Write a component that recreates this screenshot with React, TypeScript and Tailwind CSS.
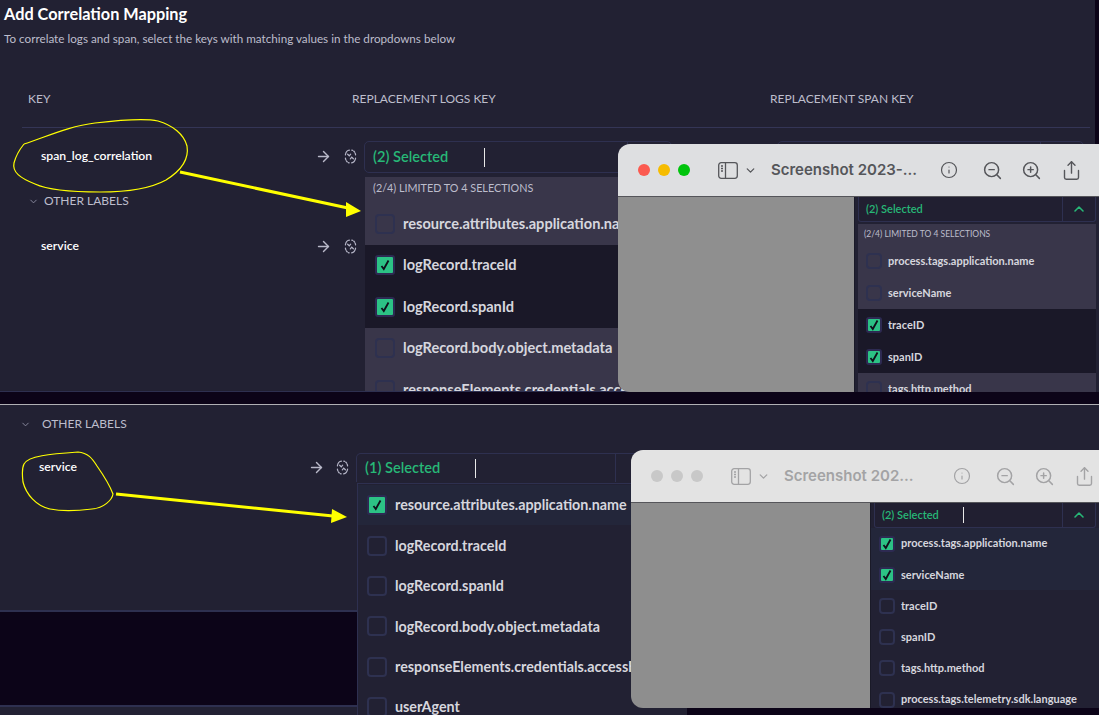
import { ArrowRight, ChevronDown, ChevronUp, Info, Share, ZoomIn, ZoomOut } from "lucide-react";

const LOG_KEYS = [
  "resource.attributes.application.name",
  "logRecord.traceId",
  "logRecord.spanId",
  "logRecord.body.object.metadata",
  "responseElements.credentials.accessKeyId",
  "userAgent",
];

// little broken circle between the arrow and the select
function SwapIcon() {
  return (
    <svg width="13" height="15" viewBox="0 0 13 15" fill="none" stroke="#b4b4c6" strokeWidth="1.2" strokeLinecap="round">
      <path d="M1.4 5.8C1.9 3 3.6 1.3 5.4 1.2" />
      <path d="M11.6 5.8C11.1 3 9.4 1.3 7.8 1.2" strokeDasharray="1.5 1.2" />
      <path d="M1.4 9.2C1.9 12 3.6 13.7 5.2 13.8" strokeDasharray="1.5 1.2" />
      <path d="M11.6 9.2C11.1 12 9.4 13.7 7.6 13.8" />
      <path d="M3.6 5.2l1.7 1.6 1.4-1.6" />
      <path d="M6.3 9.8l1.4-1.6 1.7 1.6" />
    </svg>
  );
}

function Check({ checked, size }: { checked: boolean; size: "lg" | "sm" }) {
  const box = size === "lg" ? "w-5 h-5" : "w-4 h-4";
  if (checked) {
    return (
      <span className={`${box} shrink-0 flex items-center justify-center rounded-[3px] bg-[#2cc285] border-2 border-[#2d2a52]`}>
        <svg width="10" height="12" viewBox="0 0 10 12" fill="none" stroke="#0f0f1a" strokeWidth="1.8">
          <path d="M1.5 7l2.3 3L8.5 1.5" />
        </svg>
      </span>
    );
  }
  return <span className={`${box} shrink-0 rounded-[4px] border-2 border-[#2e3150]`} />;
}

function Row({ label, checked, cls, text }: { label: string; checked: boolean; cls: string; text: string }) {
  const big = text !== "text-[11px]";
  return (
    <div className={`flex items-center shrink-0 ${cls}`}>
      <Check checked={checked} size={big ? "lg" : "sm"} />
      <span className={`whitespace-nowrap font-bold text-[#d6d6de] ${text}`}>{label}</span>
    </div>
  );
}

function Arrow({ d, head }: { d: string; head: string }) {
  return (
    <>
      <path d={d} stroke="#ffff00" strokeWidth="3" fill="none" />
      <polygon points={head} fill="#ffff00" />
    </>
  );
}

function Sidebar({ color }: { color: string }) {
  return (
    <svg width="20" height="17" viewBox="0 0 20 17" fill="none" stroke={color} strokeWidth="1.3">
      <rect x="0.7" y="0.7" width="18.6" height="15.6" rx="2.5" />
      <path d="M7.5 1v15" />
      <path d="M3 4h2M3 6.5h2M3 9h2" />
    </svg>
  );
}

function MacWindow({ title, focused, cls, children, gray }: { title: string; focused: boolean; cls: string; children: React.ReactNode; gray: string }) {
  const color = focused ? "#55565a" : "#a3a3a5";
  return (
    <div className={`absolute flex flex-col overflow-hidden rounded-l-[12px] ${cls}`}>
      <div className={`flex items-center h-[53px] shrink-0 pl-[20px] border-b border-[#55555a] ${focused ? "bg-[#dedfe1]" : "bg-[#e3e3e3]"}`}>
        <div className="flex gap-2">
          <span className={`w-3 h-3 rounded-full ${focused ? "bg-[#fb5a50]" : "bg-[#c8c8c8]"}`} />
          <span className={`w-3 h-3 rounded-full ${focused ? "bg-[#f6bc00]" : "bg-[#c8c8c8]"}`} />
          <span className={`w-3 h-3 rounded-full ${focused ? "bg-[#00c40c]" : "bg-[#c8c8c8]"}`} />
        </div>
        <div className="ml-[28px]"><Sidebar color={color} /></div>
        <ChevronDown className="ml-[6px]" size={13} strokeWidth={2.4} color={color} />
        <span className={`ml-[14px] w-[169px] whitespace-nowrap text-[15px] font-semibold [font-family:Inter,sans-serif] ${focused ? "text-[#55565a]" : "text-[#a3a3a5]"}`}>{title}</span>
        <Info size={18} strokeWidth={1.6} color={color} />
        <ZoomOut className="ml-[24px]" size={21} strokeWidth={1.7} color={color} />
        <ZoomIn className="ml-[18px]" size={21} strokeWidth={1.7} color={color} />
        <Share className="ml-[19px]" size={21} strokeWidth={1.6} color={color} />
      </div>
      <div className="flex flex-1 min-h-0">
        <div className={`shrink-0 ${gray}`} />
        <div className="flex-1 min-w-0 flex flex-col bg-[#222133] border-l border-[#1a1a28] overflow-hidden">{children}</div>
      </div>
    </div>
  );
}

function MiniSelect({ label, caret }: { label: string; caret?: boolean }) {
  return (
    <div className="flex items-center h-[25px] shrink-0 mx-[3px] border-b border-x border-[#2e3050] rounded-b-[3px] bg-[#211f31]">
      <span className="pl-[7px] text-[11px] font-semibold text-[#27b877]">{label}</span>
      {caret && <span className="ml-[24px] w-px h-[16px] bg-[#e8e8e8]" />}
      <span className="ml-auto flex items-center justify-center w-[33px] h-full border-l border-[#2e3050]">
        <ChevronUp size={16} strokeWidth={2.4} color="#27b877" />
      </span>
    </div>
  );
}

const TOP_ROW = "h-[41.5px] gap-2 pl-[10px]";
const BOTTOM_ROW = "h-[40.4px] gap-2 pl-[9px]";
const WIN1_ROW = "h-[32px] gap-[6px] pl-2";
const WIN2_ROW = "h-[31.2px] gap-[6px] pl-2";

export default function App() {
  return (
    <div className="relative w-[1099px] h-[715px] overflow-hidden flex flex-col bg-[#0c0418] font-['Lato',sans-serif]">
      {/* first screenshot */}
      <section className="relative h-[392px] shrink-0 w-[1095px] bg-[#222133] border-b border-[#2e3050]">
        <h1 className="pl-1 pt-[3px] text-[16.3px] leading-[22px] font-bold text-white">Add Correlation Mapping</h1>
        <p className="pl-1 mt-[5px] text-[11.7px] leading-[16px] text-[#bdbdcc]">To correlate logs and span, select the keys with matching values in the dropdowns below</p>

        <div className="mt-[44px] ml-[22px] mr-[5px] h-[38px] flex border-b border-[#343556] text-[12px] text-[#bdbdcc]">
          <span className="pl-[6px] w-[330px]">KEY</span>
          <span className="w-[418px]">REPLACEMENT LOGS KEY</span>
          <span>REPLACEMENT SPAN KEY</span>
        </div>

        <div className="mt-[13px] flex items-center h-[32px]">
          <span className="pl-[41px] w-[315px] pb-[2px] text-[12.2px] font-semibold text-white">span_log_correlation</span>
          <ArrowRight className="mb-[2px]" size={17} color="#b9b9c9" />
          <span className="ml-[12px] mb-[2px]"><SwapIcon /></span>
          <div className="ml-[7px] w-[308px] h-full flex items-center rounded-[5px] border border-[#2e3050]">
            <span className="pl-[8px] text-[14.6px] font-semibold text-[#27b877]">(2) Selected</span>
            <span className="ml-[36px] w-px h-[19px] bg-[#e8e8e8]" />
            <span className="ml-auto w-[44px] h-full border-l border-[#2e3050]" />
          </div>
          <div className="ml-[105px] w-[307px] h-full flex justify-end rounded-[5px] border border-[#2e3050]">
            <span className="w-[43px] h-full border-l border-[#2e3050]" />
          </div>
        </div>
        <div className="mt-[19px] pl-[28px] flex items-center gap-[5px] text-[12px] text-[#bdbdcc]">
          <ChevronDown size={11} color="#8d8da3" />
          OTHER LABELS
        </div>
        <div className="mt-[27px] flex items-center">
          <span className="pl-[41px] w-[315px] text-[12.2px] font-semibold text-white">service</span>
          <ArrowRight size={17} color="#b9b9c9" />
          <span className="ml-[12px]"><SwapIcon /></span>
        </div>

        {/* open dropdown */}
        <div className="absolute left-[365px] top-[177px] w-[308px] h-[214px] bg-[#39364a] flex flex-col overflow-hidden">
          <div className="h-[26px] shrink-0 flex items-center pl-2 pb-[3px] text-[10.8px] text-[#bdbdcc]">(2/4) LIMITED TO 4 SELECTIONS</div>
          <Row cls={TOP_ROW} text="text-[14.6px]" label={LOG_KEYS[0]} checked={false} />
          <div className="bg-[#1a1828]">
            <Row cls={TOP_ROW} text="text-[14.6px]" label={LOG_KEYS[1]} checked />
            <Row cls={TOP_ROW} text="text-[14.6px]" label={LOG_KEYS[2]} checked />
          </div>
          <Row cls={TOP_ROW} text="text-[14.6px]" label={LOG_KEYS[3]} checked={false} />
          <Row cls={TOP_ROW} text="text-[14.6px]" label={LOG_KEYS[4]} checked={false} />
        </div>

        <MacWindow title="Screenshot 2023-..." focused cls="left-[618px] top-[144px] w-[481px] h-[248px]" gray="w-[236px] bg-[#8f8f8f]">
          <MiniSelect label="(2) Selected" />
          <div className="flex flex-col mt-[2px] mx-[3px] bg-[#39364a] flex-1 overflow-hidden">
            <div className="h-[21px] shrink-0 flex items-center pl-[6px] text-[8.5px] text-[#bdbdcc]">(2/4) LIMITED TO 4 SELECTIONS</div>
            <Row cls={WIN1_ROW} text="text-[11px]" label="process.tags.application.name" checked={false} />
            <Row cls={WIN1_ROW} text="text-[11px]" label="serviceName" checked={false} />
            <div className="bg-[#1a1828]">
              <Row cls={WIN1_ROW} text="text-[11px]" label="traceID" checked />
              <Row cls={WIN1_ROW} text="text-[11px]" label="spanID" checked />
            </div>
            <Row cls={WIN1_ROW} text="text-[11px]" label="tags.http.method" checked={false} />
          </div>
        </MacWindow>
      </section>

      <div className="h-[13px] shrink-0 border-b border-[#b0b0b4]" />

      {/* second screenshot */}
      <section className="relative flex-1 min-h-0">
        <div className="h-[207px] bg-[#222133] border-b-2 border-[#2e3050]">
          <div className="pt-[10px] pl-[20px] flex items-center gap-[11px] text-[12px] text-[#bdbdcc]">
            <ChevronDown size={11} color="#8d8da3" />
            OTHER LABELS
          </div>
          <div className="mt-[20px] flex items-center h-[29px]">
            <span className="pl-[39px] w-[308px] text-[12.2px] font-semibold text-white">service</span>
            <ArrowRight size={17} color="#b9b9c9" />
            <span className="ml-[11px]"><SwapIcon /></span>
            <div className="ml-[7px] w-[330px] h-full flex items-center border-x border-t rounded-t-[5px] border-[#2e3050]">
              <span className="pl-[8px] text-[14.6px] font-semibold text-[#27b877]">(1) Selected</span>
              <span className="ml-[35px] w-px h-[19px] bg-[#e8e8e8]" />
              <span className="ml-auto w-[70px] h-full border-l border-[#2e3050]" />
            </div>
          </div>
        </div>
        <div className="h-[95px] border-b-2 border-[#2e3050]" />
        <div className="h-[10px] bg-[#222133]">
          <div className="ml-[660px] h-full bg-[#0c0418]" />
        </div>

        {/* open dropdown */}
        <div className="absolute left-[357px] top-[78px] w-[330px] bottom-0 pt-[1px] bg-[#222133] border-l border-t border-[#2e3050] flex flex-col overflow-hidden">
          <Row cls={`${BOTTOM_ROW} bg-[#23263a]`} text="text-[14.3px]" label={LOG_KEYS[0]} checked />
          {LOG_KEYS.slice(1).map((k) => (
            <Row key={k} cls={BOTTOM_ROW} text="text-[14.3px]" label={k} checked={false} />
          ))}
        </div>

        <MacWindow title="Screenshot 202..." focused={false} cls="left-[631px] top-[45px] w-[468px] h-[258px]" gray="w-[239px] bg-[#8e8e8e]">
          <MiniSelect label="(2) Selected" caret />
          <div className="bg-[#23263a] shrink-0">
            <Row cls={WIN2_ROW} text="text-[11px]" label="process.tags.application.name" checked />
            <Row cls={WIN2_ROW} text="text-[11px]" label="serviceName" checked />
          </div>
          <Row cls={WIN2_ROW} text="text-[11px]" label="traceID" checked={false} />
          <Row cls={WIN2_ROW} text="text-[11px]" label="spanID" checked={false} />
          <Row cls={WIN2_ROW} text="text-[11px]" label="tags.http.method" checked={false} />
          <Row cls={WIN2_ROW} text="text-[11px]" label="process.tags.telemetry.sdk.language" checked={false} />
        </MacWindow>
      </section>

      {/* yellow marks drawn on top of the screenshots */}
      <svg className="absolute left-0 top-0 pointer-events-none" width="400" height="540" viewBox="0 0 400 540" fill="none">
        <path d="M24 144C48 136 70 126 95 123C120 120 145 118 158 121C172 125 184 134 187 146C189 158 182 170 166 180C148 190 125 192 100 192C75 192 50 191 35 184C20 178 12 172 14 163C16 155 20 149 24 144" stroke="#ffff00" strokeWidth="1.2" />
        <Arrow d="M180 172L348 208" head="346,202 361,211 346,217" />
        <path d="M24 464C28 456 50 454 78 452C88 453 92 458 97 466C104 476 110 486 113 494C112 500 104 508 92 509C76 511 60 511 50 509C36 506 26 494 23 482C22 474 22 468 24 464" stroke="#ffff00" strokeWidth="1.2" />
        <Arrow d="M116 494L333 516" head="332,509 347,517 331,523" />
      </svg>
    </div>
  );
}
